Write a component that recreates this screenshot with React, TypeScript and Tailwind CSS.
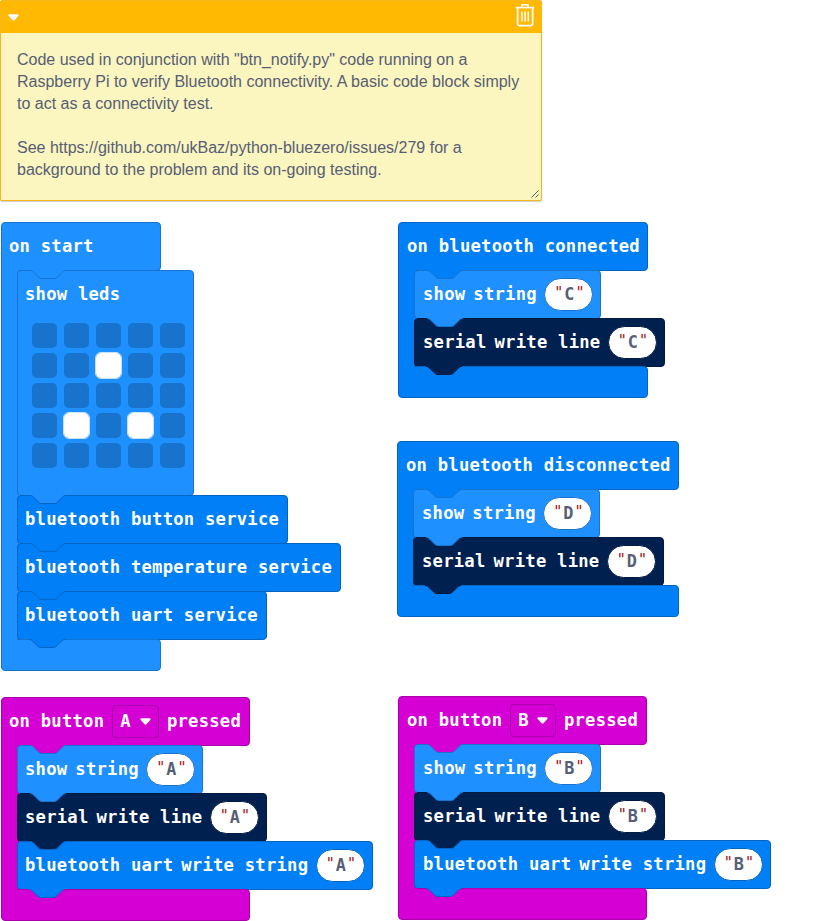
import React from "react";

type Kind = "basic" | "bluetooth" | "serial" | "input";

const BG: Record<Kind, string> = {
  basic: "bg-[#1e90ff]",
  bluetooth: "bg-[#007ff7]",
  serial: "bg-[#002050]",
  input: "bg-[#d400d4]",
};
const BORDER: Record<Kind, string> = {
  basic: "border-[#1873cc]",
  bluetooth: "border-[#0065c3]",
  serial: "border-[#001a40]",
  input: "border-[#aa00aa]",
};
const FILL: Record<Kind, string> = {
  basic: "fill-[#1e90ff]",
  bluetooth: "fill-[#007ff7]",
  serial: "fill-[#002050]",
  input: "fill-[#d400d4]",
};
const STROKE: Record<Kind, string> = {
  basic: "stroke-[#1873cc]",
  bluetooth: "stroke-[#0065c3]",
  serial: "stroke-[#001a40]",
  input: "stroke-[#aa00aa]",
};

const NOTCH = "c2,0 3,1 4,2 l4,4 c1,1 2,2 4,2 h12 c2,0 3,-1 4,-2 l4,-4 c1,-1 2,-2 4,-2";

/* Connector tab hanging from the block above into the one below */
function Notch({ fill, line }: { fill: Kind; line: Kind }) {
  return (
    <svg className="absolute -top-px left-[11px] h-[10px] w-[38px]" viewBox="0 0 38 10">
      <path d={`M1,0 V0.5 ${NOTCH} V0 Z`} className={FILL[fill]} />
      <path d={`M1,0.5 ${NOTCH}`} fill="none" className={STROKE[line]} />
    </svg>
  );
}

function Caret() {
  return (
    <svg className="h-[7px] w-[11px] shrink-0" viewBox="0 0 11 7">
      <path d="M1.5,0.3 H9.5 C10.6,0.3 11,1.3 10.3,2.1 L6.7,6 C6,6.8 5,6.8 4.3,6 L0.7,2.1 C0,1.3 0.4,0.3 1.5,0.3 Z" fill="#fff" />
    </svg>
  );
}

function Quote() {
  return <span className="w-[10.6px] pb-[3px] text-center text-[15px] tracking-normal font-normal text-[#a31515]">"</span>;
}

function Pill({ value, edge }: { value: string; edge: Kind }) {
  return (
    <span className={`flex h-[33px] w-[49px] items-center justify-center rounded-full border bg-white pl-px text-[#575e75] ${BORDER[edge]}`}>
      <Quote />
      <span className="w-[10.6px] pb-px text-center text-[16.8px] tracking-normal">{value}</span>
      <Quote />
    </span>
  );
}

function Block({ kind, above, labels, value, inset, children }: {
  kind: Kind;
  above: Kind;
  labels: string[];
  value?: string;
  inset: string;
  children?: React.ReactNode;
}) {
  return (
    <div className={`relative -mb-px w-fit rounded border ${inset} ${BG[kind]} ${BORDER[kind]}`}>
      <Notch fill={above} line={kind === "serial" ? above : kind} />
      <div className="flex h-[47px] items-center gap-2">
        {labels.map((label) => <span key={label} className="pb-px">{label}</span>)}
        {value && <span className="-mt-px -mr-px -ml-[0.5px]"><Pill value={value} edge={kind} /></span>}
      </div>
      {children}
    </div>
  );
}

type Item = { kind: Kind; labels: string[]; value?: string; extra?: React.ReactNode };

function EventBlock({ kind, place, width, inset, head, items }: {
  kind: Kind;
  place: string;
  width: string;
  inset: string;
  head: React.ReactNode;
  items: Item[];
}) {
  const last = items[items.length - 1].kind;
  return (
    <section className={`absolute ${place}`}>
      <div className={`-mb-px flex h-[49px] items-center gap-2 rounded rounded-bl-none border pb-px ${inset} ${width} ${BG[kind]} ${BORDER[kind]}`}>{head}</div>
      <div className="relative flex">
        <div className={`relative -mt-px -mr-0.5 -mb-1 w-[18px] shrink-0 border-l ${BG[kind]} ${BORDER[kind]}`} />
        <div className="flex flex-col items-start">
          {items.map((item, i) => (
            <Block key={i} kind={item.kind} above={i === 0 ? kind : items[i - 1].kind} labels={item.labels} value={item.value} inset={inset}>
              {item.extra}
            </Block>
          ))}
        </div>
      </div>
      <div className="relative">
        <div className={`h-8 rounded rounded-tl-none border ${width} ${BG[kind]} ${BORDER[kind]}`} />
        <div className={`absolute top-0 left-px h-px w-[15px] ${BG[kind]}`} />
        <div className="absolute top-px left-4">
          <Notch fill={last} line={last} />
        </div>
      </div>
    </section>
  );
}

const LIT = [7, 16, 18];

function Leds() {
  return (
    <div className="h-[177px] pt-[5px] pl-[7px]">
      <div className="grid w-fit grid-cols-5 gap-x-[7px] gap-y-[5px]">
        {Array.from({ length: 25 }, (_, i) => (
          <div
            key={i}
            className={`size-[25px] rounded-[5px] ${LIT.includes(i) ? "bg-white outline-1 outline-[#c6e2ff]" : "bg-[#1873cc]"}`}
          />
        ))}
      </div>
    </div>
  );
}

function ButtonHead({ name }: { name: string }) {
  return (
    <>
      <span>on button</span>
      <span className="flex h-[33px] w-[47px] items-center justify-between rounded border border-[#aa00aa] px-[7px]">
        {name}
        <Caret />
      </span>
      <span>pressed</span>
    </>
  );
}

function Comment() {
  return (
    <section className="absolute top-0 left-0 flex h-[201px] w-[542px] flex-col rounded-[2px] border border-[#f5b71c] bg-[#fbf5bf] font-normal tracking-normal shadow-[0_1px_1px_rgba(0,0,0,0.2)]">
      <header className="flex h-8 shrink-0 items-center justify-between bg-[#ffb902] pr-[6px] pl-[7px]">
        <span className="mt-px flex"><Caret /></span>
        <svg className="mt-[-4px] h-6 w-5" viewBox="0 0 20 24" fill="none" stroke="#fff">
          <path d="M0.8,4.6 H19.2" strokeWidth="1.6" />
          <path d="M7,4 V1.7 H13 V4" strokeWidth="1.5" />
          <path d="M2.6,5 V21 Q2.6,22.6 4.2,22.6 H16 Q17.6,22.6 17.6,21 V5" strokeWidth="1.7" />
          <path d="M6.9,8.5 V18.5 M10.1,8.5 V18.5 M13.3,8.5 V18.5" strokeWidth="1.5" />
        </svg>
      </header>
      <p className="grow px-4 pt-4 font-['Liberation_Sans',Arial,sans-serif] text-[16px] leading-[22px] whitespace-pre text-[#575e75]">
        {'Code used in conjunction with "btn_notify.py" code running on a\nRaspberry Pi to verify Bluetooth connectivity. A basic code block simply\nto act as a connectivity test.\n\nSee https://github.com/ukBaz/python-bluezero/issues/279 for a\nbackground to the problem and its on-going testing.'}
      </p>
      <svg className="absolute right-[2px] bottom-[2px] size-2" viewBox="0 0 8 8" stroke="#575e55" strokeWidth="1">
        <path d="M0.5,7.5 L7.5,0.5 M4.5,7.5 L7.5,4.5" />
      </svg>
    </section>
  );
}

const LEFT_INSET = "pl-[7px] pr-2";
const RIGHT_INSET = "pl-2 pr-2";

export default function App() {
  return (
    <main className="relative h-[921px] w-[823px] overflow-hidden bg-white font-['DejaVu_Sans_Mono',monospace] text-[17.2px] leading-6 font-bold tracking-[0.24px] whitespace-pre text-white">
      <Comment />
      <EventBlock
        kind="basic"
        place="top-[222px] left-px"
        width="w-[160px]"
        inset={LEFT_INSET}
        head="on start"
        items={[
          { kind: "basic", labels: ["show leds"], extra: <Leds /> },
          { kind: "bluetooth", labels: ["bluetooth button service"] },
          { kind: "bluetooth", labels: ["bluetooth temperature service"] },
          { kind: "bluetooth", labels: ["bluetooth uart service"] },
        ]}
      />
      <EventBlock
        kind="bluetooth"
        place="top-[222px] left-[398px]"
        width="w-[250px]"
        inset={RIGHT_INSET}
        head="on bluetooth connected"
        items={[
          { kind: "basic", labels: ["show", "string"], value: "C" },
          { kind: "serial", labels: ["serial", "write line"], value: "C" },
        ]}
      />
      <EventBlock
        kind="bluetooth"
        place="top-[441px] left-[397px]"
        width="w-[282px]"
        inset={RIGHT_INSET}
        head="on bluetooth disconnected"
        items={[
          { kind: "basic", labels: ["show", "string"], value: "D" },
          { kind: "serial", labels: ["serial", "write line"], value: "D" },
        ]}
      />
      <EventBlock
        kind="input"
        place="top-[697px] left-px"
        width="w-[249px]"
        inset={LEFT_INSET}
        head={<ButtonHead name="A" />}
        items={[
          { kind: "basic", labels: ["show", "string"], value: "A" },
          { kind: "serial", labels: ["serial", "write line"], value: "A" },
          { kind: "bluetooth", labels: ["bluetooth uart", "write string"], value: "A" },
        ]}
      />
      <EventBlock
        kind="input"
        place="top-[696px] left-[398px]"
        width="w-[249px]"
        inset={RIGHT_INSET}
        head={<ButtonHead name="B" />}
        items={[
          { kind: "basic", labels: ["show", "string"], value: "B" },
          { kind: "serial", labels: ["serial", "write line"], value: "B" },
          { kind: "bluetooth", labels: ["bluetooth uart", "write string"], value: "B" },
        ]}
      />
    </main>
  );
}
